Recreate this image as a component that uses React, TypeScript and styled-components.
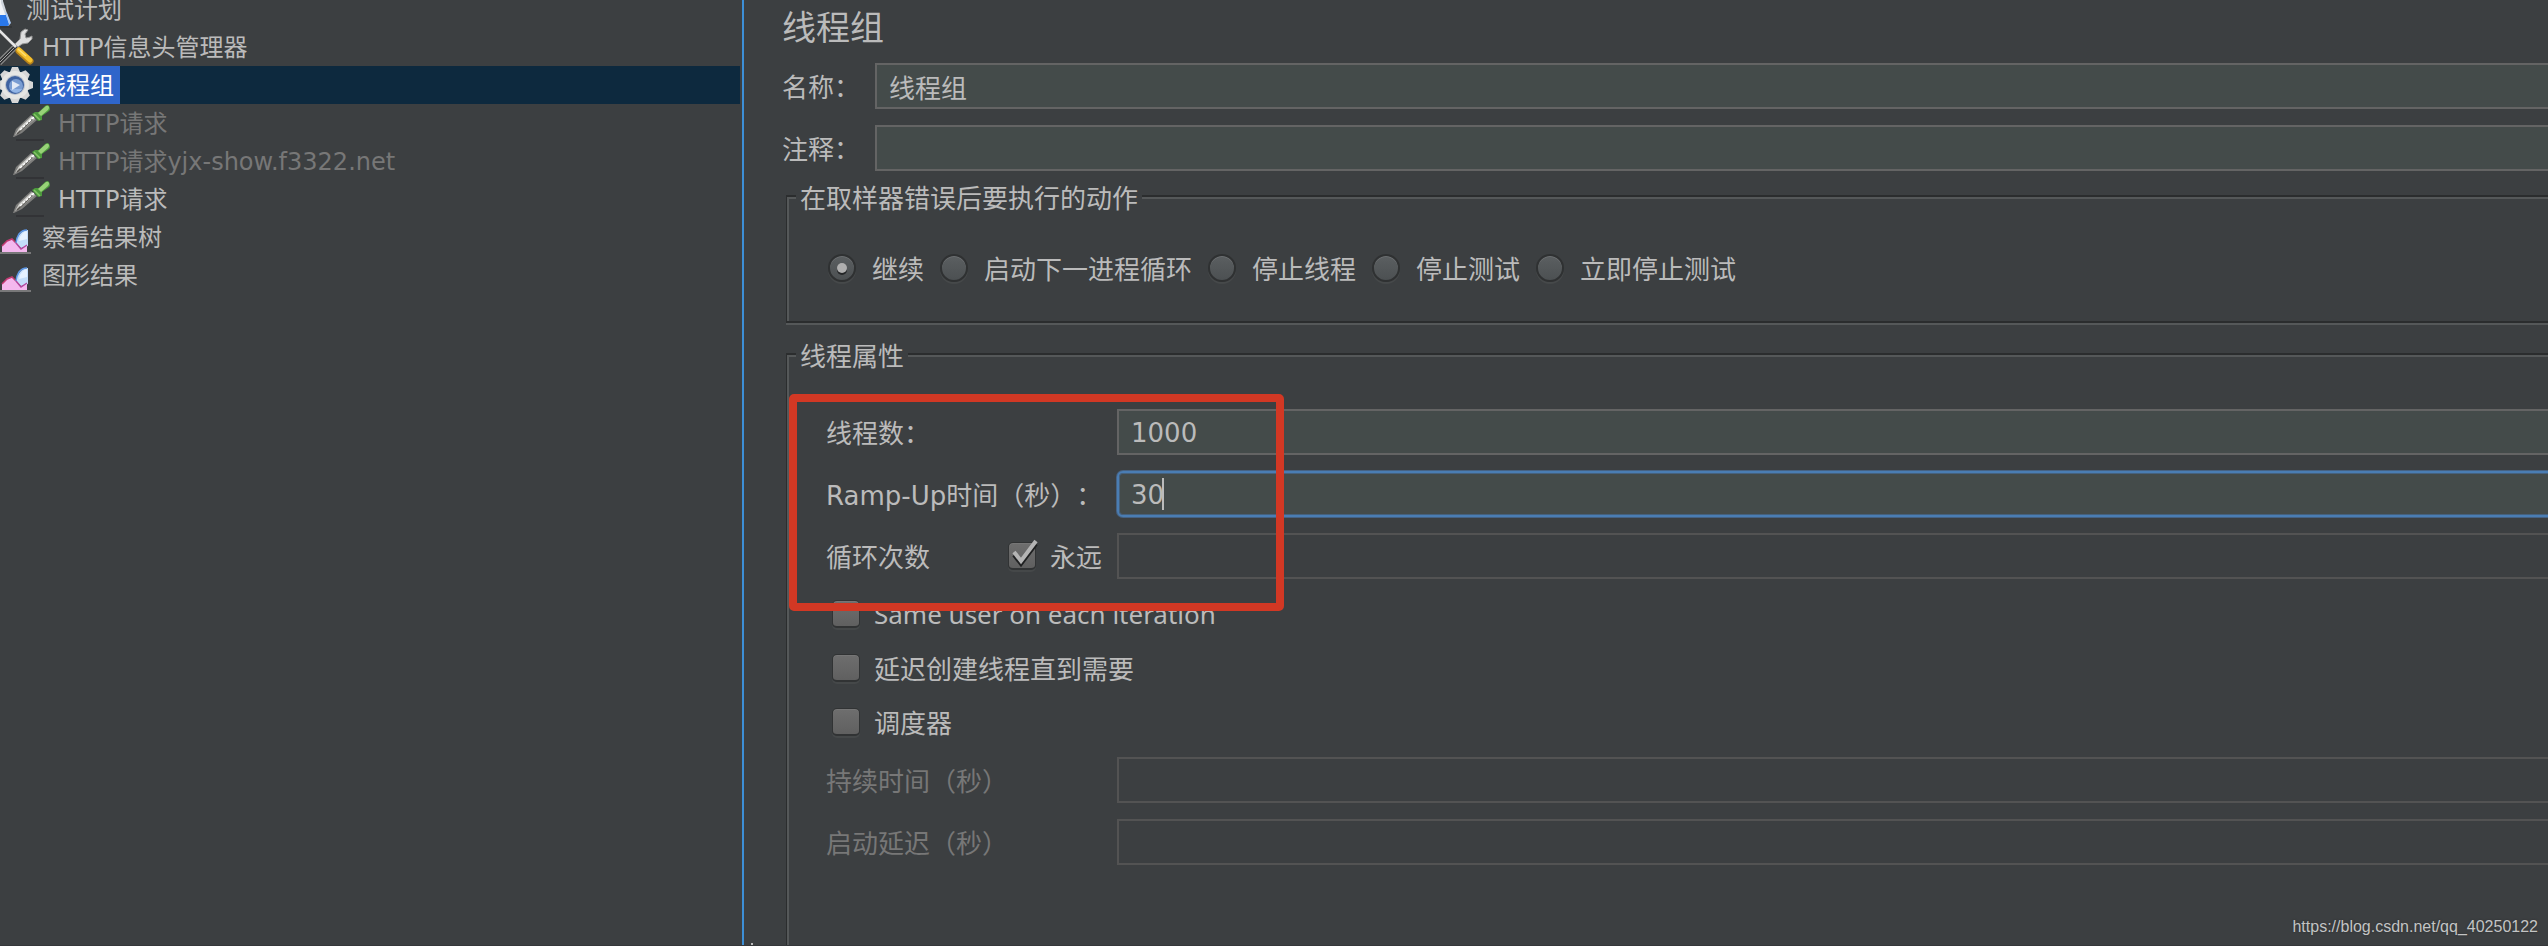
import React from "react";
import styled, { createGlobalStyle, css } from "styled-components";

const color = {
  panel: "#3c3f41",
  text: "#bbbbbb",
  muted: "#777777",
  field: "#444b4a",
  line: "#646464",
  lineOff: "#535353",
  dark: "#2b2d2e",
  light: "#555859",
};

const GlobalStyle = createGlobalStyle`
  * { box-sizing: border-box; }
  body {
    margin: 0;
    background: ${color.panel};
    color: ${color.text};
    font-family: "DejaVu Sans", "Noto Sans CJK SC", sans-serif;
    font-size: 26px;
    line-height: 36px;
    text-spacing-trim: space-all;
  }
`;

const Page = styled.div`
  position: relative;
  display: flex;
  height: 100vh;
  overflow: hidden;
  border-bottom: 1px solid #35373a;
`;

const Sidebar = styled.nav`
  flex: 0 0 744px;
  padding-right: 2px;
  border-right: 2px solid #3d8fd6;
  overflow: hidden;
`;

const Tree = styled.ul`
  list-style: none;
  margin: -10px 0 0 -20px;
  padding: 0;
  font-size: 24px;
`;

const TreeRow = styled.li<{ $level: number; $selected?: boolean; $off?: boolean }>`
  display: flex;
  gap: 6px;
  height: 38px;
  line-height: 38px;
  white-space: nowrap;
  padding-left: ${(p) => p.$level * 16}px;
  color: ${(p) => (p.$selected ? "#ffffff" : p.$off ? color.muted : color.text)};
  background: ${(p) => (p.$selected ? "#0d293e" : "transparent")};
`;

const TreeLabel = styled.span<{ $selected?: boolean }>`
  height: 38px;
  padding: 1px 6px 0 2px;
  background: ${(p) => (p.$selected ? "#2f65ca" : "transparent")};
`;

const TreeIcon = styled.svg`
  flex: none;
  width: 38px;
  height: 38px;
`;

const Main = styled.main`
  position: relative;
  flex: 1;
  min-width: 0;
  overflow: hidden;
  display: flex;
  flex-direction: column;
  padding: 7px 0 0 38px;

  &::after {
    content: "";
    position: absolute;
    left: 7px;
    bottom: 0;
    width: 2px;
    height: 2px;
    background: ${color.text};
  }
`;

const Title = styled.h1`
  margin: 0 0 14px;
  font-size: 34px;
  font-weight: 400;
  line-height: 42px;
`;

const Fields = styled.div`
  display: flex;
  flex-direction: column;
  gap: 16px;
  margin-right: -8px;
`;

const FieldRow = styled.div<{ $label: number }>`
  display: grid;
  grid-template-columns: ${(p) => p.$label}px 1fr;
  align-items: center;
  white-space: nowrap;
`;

const Label = styled.label<{ $off?: boolean }>`
  padding-top: 3px;
  color: ${(p) => (p.$off ? color.muted : "inherit")};
`;

const TextField = styled.input<{ $focus?: boolean; $numeric?: boolean }>`
  display: block;
  width: 100%;
  height: 46px;
  padding: ${(p) => (p.$numeric ? 2 : 0)}px 12px 0;
  border: 2px solid ${color.line};
  border-radius: 0;
  outline: none;
  background: ${color.field};
  color: inherit;
  font: inherit;

  &:disabled {
    border-color: ${color.lineOff};
    background: ${color.panel};
  }

  ${(p) =>
    p.$focus &&
    css`
      border-color: #4a7db3;
      border-radius: 6px;
      caret-color: transparent;
      box-shadow: 0 0 0 1px #466283, inset 0 0 0 1px #46617d;
    `}
`;

const FocusedField = styled.div`
  position: relative;
`;

const Caret = styled.span`
  position: absolute;
  left: 45px;
  top: 7px;
  width: 2px;
  height: 32px;
  background: ${color.text};
`;

const Group = styled.fieldset<{ $fill?: boolean }>`
  min-width: 0;
  margin: 0 -8px 0 4px;
  padding: ${(p) => (p.$fill ? "37px 0 0 39px" : "40px 0 39px 41px")};
  border: 2px solid ${color.dark};
  border-width: 2px 0 2px 1px;
  box-shadow: inset 2px 2px 0 ${color.light}, 0 2px 0 ${color.light};
  ${(p) =>
    p.$fill &&
    css`
      flex: 1 0 auto;
      border-bottom: 0;
    `}
`;

const Legend = styled.legend<{ $pull: number }>`
  margin-left: -${(p) => p.$pull}px;
  padding: 6px 4px 0;
  line-height: 30px;
  background: ${color.panel};
`;

const TopGap = styled.div<{ $size: number }>`
  flex: 0 0 ${(p) => p.$size}px;
`;

const Radios = styled.div`
  display: flex;
  gap: 16px;
  height: 28px;
  align-items: center;
`;

const Choice = styled.label<{ $gap: number }>`
  display: flex;
  align-items: center;
  gap: ${(p) => p.$gap}px;
  white-space: nowrap;
`;

const ChoiceText = styled.span`
  padding-top: 3px;
`;

const Radio = styled.input.attrs({ type: "radio" })`
  appearance: none;
  display: grid;
  place-items: center;
  width: 28px;
  height: 28px;
  margin: 0;
  border: 2px solid #2f3132;
  border-radius: 50%;
  background: linear-gradient(#5b5f61, #4c5052);
  box-shadow: 0 2px 0 #46494a, inset 0 1px 0 #6d7072;

  &:checked::before {
    content: "";
    width: 10px;
    height: 10px;
    border-radius: 50%;
    background: #afafaf;
    box-shadow: 0 2px 0 #242627;
  }
`;

const TickHolder = styled.span`
  display: grid;
  width: 28px;
  height: 28px;

  > * {
    grid-area: 1 / 1;
  }
`;

const TickBox = styled.input.attrs({ type: "checkbox" })`
  appearance: none;
  width: 28px;
  height: 28px;
  margin: 0;
  border: 1px solid #313334;
  border-bottom-width: 2px;
  border-radius: 5px;
  background: linear-gradient(#6e6e6e, #606060);
  box-shadow: 0 2px 0 #454849, inset 0 1px 0 #767676;
`;

const TickMark = styled.svg`
  width: 28px;
  height: 28px;
  overflow: visible;
  pointer-events: none;
`;

const LoopLabels = styled.div`
  display: flex;
  justify-content: space-between;
  padding-right: 15px;
`;

const Options = styled.div`
  display: flex;
  flex-direction: column;
  margin: -8px 0 -8px 6px;

  > label {
    height: 54px;
  }
`;

const LatinText = styled.span`
  font-family: "Noto Sans", sans-serif;
`;

const Properties = styled.div`
  position: relative;
`;

const Highlight = styled.div`
  position: absolute;
  left: -37px;
  top: -15px;
  width: 495px;
  height: 217px;
  border: 8px solid #d23824;
  border-radius: 5px;
  pointer-events: none;
`;

const Watermark = styled.a`
  position: absolute;
  right: 10px;
  bottom: 8px;
  color: #c3c4c4;
  font-family: "Liberation Sans", sans-serif;
  font-size: 16px;
  line-height: 20px;
  text-decoration: none;
  text-shadow: 0 0 2px #2b2d2e;
`;

const FlaskIcon = () => (
  <TreeIcon viewBox="0 0 38 38">
    <path d="M15 2h8v9l7 22q0 3-3 3H8q-3 0-2-3l9-22z" fill="#cfd5dc" />
    <path d="M18 3h3v10l5 14h-8z" fill="#f0f2f5" />
    <path d="M10 25h16l3 9q0 2-2 2H8q-2 0-2-2z" fill="#2a78ea" />
    <path d="M25 22l2 1 4 10q0 1-2 1z" fill="#a9c9f5" />
    <path d="M10 37h22" stroke="#2c2e30" strokeWidth="1" />
  </TreeIcon>
);

const ToolsIcon = () => (
  <TreeIcon viewBox="0 0 38 38">
    <path d="M3 35L21 17" stroke="#8f8f8f" strokeWidth="6" />
    <path d="M3 35L20 18" stroke="#2f3133" strokeWidth="3.5" />
    <path d="M4 34L20 18" stroke="#a5a5a5" strokeWidth="1" />
    <path
      d="M19 16l5-5 1-7 4-3 3 1-3 4 1 4 4-1 2-1v3l-4 4-6 1-4 3z"
      fill="#dedede"
      stroke="#969696"
      strokeWidth="1"
    />
    <path d="M3 2L20 19" stroke="#e6e6e6" strokeWidth="2.5" />
    <path d="M3 4L19 20" stroke="#8c8c8c" strokeWidth="1" />
    <path d="M23 23L34 33" stroke="#b98419" strokeWidth="7" strokeLinecap="round" />
    <path d="M23 22L34 32" stroke="#f6c22f" strokeWidth="5" strokeLinecap="round" />
    <path d="M22 21L30 28" stroke="#ffdf73" strokeWidth="1.5" />
  </TreeIcon>
);

const GearIcon = () => (
  <TreeIcon viewBox="0 0 38 38">
    {[0, 45, 90, 135].map((a) => (
      <path
        key={a}
        d="M14 6L16 1h6l2 5v26l-2 5h-6l-2-5z"
        fill="#d6d6d6"
        transform={`rotate(${a} 19 19)`}
      />
    ))}
    <circle cx="19" cy="19" r="14" fill="#e6e6e4" />
    <circle cx="19" cy="19" r="10" fill="#b9c0cc" />
    <circle cx="19" cy="19" r="9" fill="#3f62a0" />
    <circle cx="20" cy="20" r="7" fill="#7a9dd2" />
    <path d="M14 23a7 7 0 0 0 12 0z" fill="#94b6e6" />
    <path d="M16 15l8 4-8 5z" fill="#e3eaf5" />
  </TreeIcon>
);

const DropperIcon = () => (
  <TreeIcon viewBox="0 0 38 38">
    <path d="M4 36h28" stroke="#2f3133" strokeWidth="1.5" />
    <path d="M1 33l3-8L19 11l6 5L10 29l-8 4z" fill="#7e7e7c" />
    <path d="M3 31l4-7L20 12l3 3L9 27z" fill="#cfcfcb" />
    <path d="M5 30L21 15" stroke="#55534f" strokeWidth="1.5" />
    <path d="M8 26L22 13" stroke="#ffffff" strokeWidth="1.5" strokeDasharray="3 1" />
    <path d="M20 10l3-2 4 0 6-6q3-2 4 0 2 3 0 5l-7 5v4l-4 1z" fill="#4c9a3c" />
    <path d="M26 9l8-7q2-1 3 1 0 2-1 3l-7 6z" fill="#98d278" />
    <path d="M22 10l6 6" stroke="#86c568" strokeWidth="1.5" />
  </TreeIcon>
);

const ChartIcon = () => (
  <TreeIcon viewBox="0 0 38 38">
    <path d="M4 35h31" stroke="#8c8c8c" strokeWidth="1.5" />
    <path d="M6 34v-6l5-5 5-2 4 4 5 6 6-4v7z" fill="#f4b8ee" />
    <path d="M6 28l5-5 5-2 4 4" fill="none" stroke="#c23a72" strokeWidth="1.5" />
    <path d="M32 12v16l-7 2-5-5q0-5 4-9 3-4 8-4z" fill="#c4defa" />
    <path d="M31 13v8l-8 2q0-4 3-7 2-3 5-3z" fill="#e6f2ff" />
    <path d="M31 12q-5 0-8 4-3 5-3 9" fill="none" stroke="#5d97e6" strokeWidth="1.5" />
    <path d="M20 25l5 6 6-4" fill="none" stroke="#b5489e" strokeWidth="1.5" />
  </TreeIcon>
);

type Node = { text: string; icon: React.FC; level: number; selected?: boolean; off?: boolean };

const nodes: Node[] = [
  { text: "测试计划", icon: FlaskIcon, level: 0 },
  { text: "HTTP信息头管理器", icon: ToolsIcon, level: 1 },
  { text: "线程组", icon: GearIcon, level: 1, selected: true },
  { text: "HTTP请求", icon: DropperIcon, level: 2, off: true },
  { text: "HTTP请求yjx-show.f3322.net", icon: DropperIcon, level: 2, off: true },
  { text: "HTTP请求", icon: DropperIcon, level: 2 },
  { text: "察看结果树", icon: ChartIcon, level: 1 },
  { text: "图形结果", icon: ChartIcon, level: 1 },
];

const errorActions = ["继续", "启动下一进程循环", "停止线程", "停止测试", "立即停止测试"];

export default function App() {
  return (
    <Page lang="zh-CN">
      <GlobalStyle />
      <Sidebar>
        <Tree>
          {nodes.map((n, i) => (
            <TreeRow key={i} $level={n.level} $selected={n.selected} $off={n.off}>
              <n.icon />
              <TreeLabel $selected={n.selected}>{n.text}</TreeLabel>
            </TreeRow>
          ))}
        </Tree>
      </Sidebar>
      <Main>
        <Title>线程组</Title>
        <Fields>
          <FieldRow $label={93}>
            <Label htmlFor="name">名称：</Label>
            <TextField id="name" defaultValue="线程组" />
          </FieldRow>
          <FieldRow $label={93}>
            <Label htmlFor="comment">注释：</Label>
            <TextField id="comment" />
          </FieldRow>
        </Fields>
        <TopGap $size={7} />
        <Group>
          <Legend $pull={32}>在取样器错误后要执行的动作</Legend>
          <Radios>
            {errorActions.map((a, i) => (
              <Choice key={a} $gap={16}>
                <Radio name="on-error" defaultChecked={i === 0} />
                <ChoiceText>{a}</ChoiceText>
              </Choice>
            ))}
          </Radios>
        </Group>
        <TopGap $size={13} />
        <Group $fill>
          <Legend $pull={30}>线程属性</Legend>
          <Properties>
            <Fields>
              <FieldRow $label={291}>
                <Label htmlFor="threads">线程数：</Label>
                <TextField id="threads" defaultValue="1000" $numeric />
              </FieldRow>
              <FieldRow $label={291}>
                <Label htmlFor="ramp">Ramp-Up时间（秒）：</Label>
                <FocusedField>
                  <TextField id="ramp" defaultValue="30" $numeric $focus />
                  <Caret />
                </FocusedField>
              </FieldRow>
              <FieldRow $label={291}>
                <LoopLabels>
                  <Label htmlFor="loops">循环次数</Label>
                  <Choice $gap={14}>
                    <TickHolder>
                      <TickBox defaultChecked />
                      <TickMark viewBox="0 0 28 28">
                        <path d="M6 13l7 9L28 2" fill="none" stroke="#1f2021" strokeWidth="4" />
                        <path d="M6 10l7 9L28 -1" fill="none" stroke="#b4b4b4" strokeWidth="4" />
                      </TickMark>
                    </TickHolder>
                    <ChoiceText>永远</ChoiceText>
                  </Choice>
                </LoopLabels>
                <TextField id="loops" disabled />
              </FieldRow>
              <Options>
                <Choice $gap={14}>
                  <TickBox />
                  <LatinText>Same user on each iteration</LatinText>
                </Choice>
                <Choice $gap={14}>
                  <TickBox />
                  <ChoiceText>延迟创建线程直到需要</ChoiceText>
                </Choice>
                <Choice $gap={14}>
                  <TickBox />
                  <ChoiceText>调度器</ChoiceText>
                </Choice>
              </Options>
              <FieldRow $label={291}>
                <Label htmlFor="duration" $off>持续时间（秒）</Label>
                <TextField id="duration" disabled />
              </FieldRow>
              <FieldRow $label={291}>
                <Label htmlFor="delay" $off>启动延迟（秒）</Label>
                <TextField id="delay" disabled />
              </FieldRow>
            </Fields>
            <Highlight />
          </Properties>
        </Group>
      </Main>
      <Watermark href="https://blog.csdn.net/qq_40250122">https://blog.csdn.net/qq_40250122</Watermark>
    </Page>
  );
}
